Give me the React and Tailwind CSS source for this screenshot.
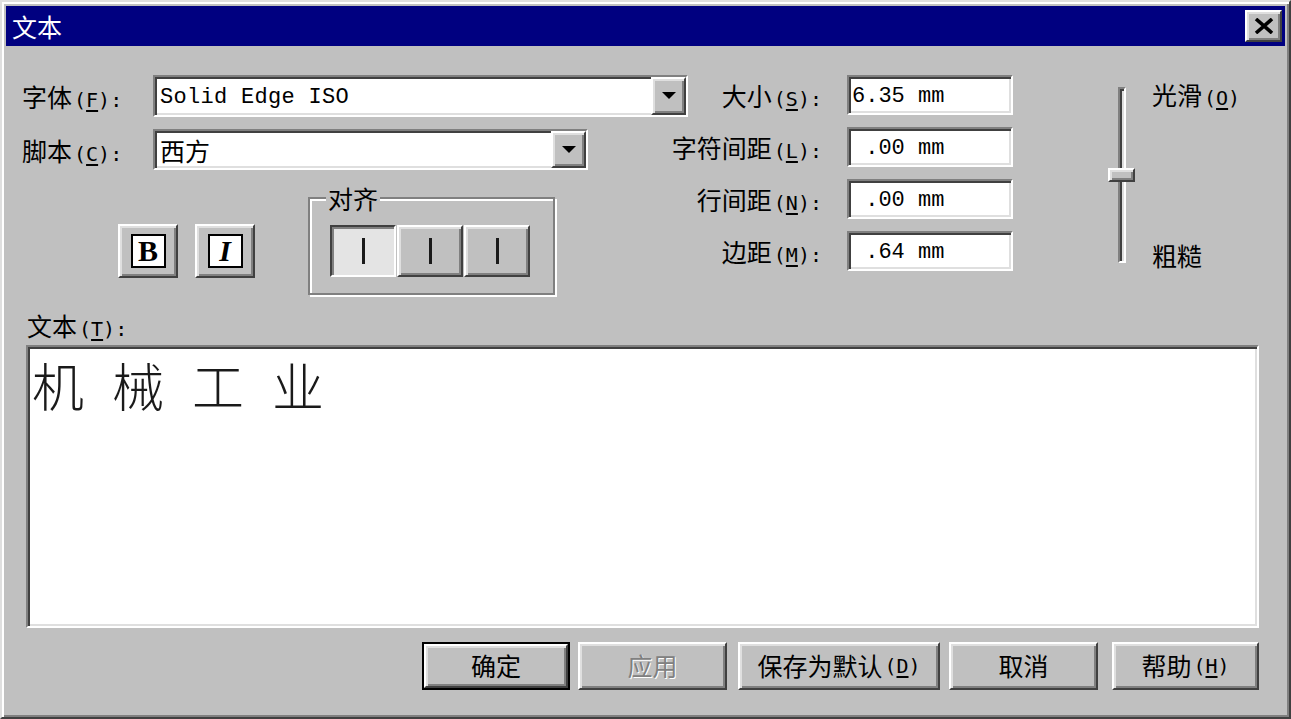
import React from "react";

const raised =
  "border-2 border-t-white border-l-white border-r-[#404040] border-b-[#404040] shadow-[inset_2px_2px_0_#dfdfdf,inset_-2px_-2px_0_#808080]";
const sunken =
  "border-2 border-t-[#808080] border-l-[#808080] border-r-white border-b-white shadow-[inset_2px_2px_0_#404040,inset_-2px_-2px_0_#dfdfdf]";

const cjk = { fontFamily: '"Noto Sans CJK SC", "Noto Sans", sans-serif' };
const mono = { fontFamily: '"DejaVu Sans Mono", "Liberation Mono", monospace' };

function Mn({ k, colon = true }) {
  return (
    <span className="text-[20px] ml-[2px]" style={mono}>
      (<span className="underline underline-offset-[3px]">{k}</span>){colon ? ":" : ""}
    </span>
  );
}

function Label({ text, k, className = "", colon = true }) {
  return (
    <div className={"h-[30px] leading-[30px] text-[25px] text-black whitespace-nowrap " + className}>
      <span>{text}</span>
      <Mn k={k} colon={colon} />
    </div>
  );
}

function Triangle() {
  return (
    <svg width="16" height="8" viewBox="0 0 16 8">
      <polygon points="1,0 15,0 8,7" fill="#000" />
    </svg>
  );
}

function Combo({ w, h, value, monoText }) {
  return (
    <div className={"flex bg-white " + sunken + " " + w + " " + h}>
      <div className="flex-1 flex items-center pl-[5px] pt-[2px] overflow-hidden">
        {monoText ? (
          <span className="text-[22px] tracking-[0.3px] text-black" style={{ fontFamily: '"Liberation Mono", monospace' }}>
            {value}
          </span>
        ) : (
          <span className="text-[25px] text-black leading-none">{value}</span>
        )}
      </div>
      <div className={"w-[35px] h-full bg-[#c0c0c0] flex items-center justify-center " + raised}>
        <Triangle />
      </div>
    </div>
  );
}

function Field({ value }) {
  return (
    <div className={"w-[166px] h-[40px] bg-white flex items-center pl-[3px] pt-[3px] " + sunken}>
      <span className="text-[22px] text-black whitespace-pre" style={{ fontFamily: '"Liberation Mono", monospace' }}>
        {value}
      </span>
    </div>
  );
}

function Btn({ children, w, className = "", def = false, disabled = false }) {
  const inner = (
    <div
      className={
        "w-full h-full flex items-center justify-center text-[25px] bg-[#c0c0c0] " +
        raised +
        (disabled ? " text-[#808080] [text-shadow:1px_1px_0_#ffffff]" : " text-black")
      }
    >
      {children}
    </div>
  );
  if (def) {
    return <div className={"h-[48px] border-2 border-black " + w + " " + className}>{inner}</div>;
  }
  return <div className={"h-[48px] " + w + " " + className}>{inner}</div>;
}

function AlignBtn({ pressed }) {
  return (
    <div
      className={
        "w-[66px] h-[52px] flex items-center justify-center " +
        (pressed
          ? "bg-[#e4e4e4] border-2 border-t-[#404040] border-l-[#404040] border-r-white border-b-white shadow-[inset_2px_2px_0_#808080]"
          : "bg-[#c0c0c0] " + raised)
      }
    >
      <div className="w-[3px] h-[26px] bg-[#1a1a1a]" />
    </div>
  );
}

function StyleBtn({ children, italic }) {
  return (
    <div className={"w-[60px] h-[54px] bg-[#c0c0c0] flex items-center justify-center " + raised}>
      <div className="w-[35px] h-[34px] bg-white border-2 border-black flex items-center justify-center overflow-hidden">
        <span
          className={"text-[30px] font-bold leading-none text-black " + (italic ? "italic" : "")}
          style={{ fontFamily: '"Liberation Serif", serif' }}
        >
          {children}
        </span>
      </div>
    </div>
  );
}

export default function App() {
  return (
    <div
      className="w-[1291px] h-[719px] bg-[#c0c0c0] border-2 border-t-[#dfdfdf] border-l-[#dfdfdf] border-r-[#404040] border-b-[#404040] shadow-[inset_2px_2px_0_#ffffff,inset_-2px_-2px_0_#808080] p-[4px] flex flex-col overflow-hidden"
      style={cjk}
    >
      {/* Title bar */}
      <div className="h-[40px] shrink-0 bg-[#000080] flex items-center justify-between pl-[6px] pr-[3px]">
        <span className="text-white text-[25px] leading-none">文本</span>
        <div className={"w-[37px] h-[32px] bg-[#c0c0c0] flex items-center justify-center " + raised}>
          <svg width="20" height="16" viewBox="0 0 20 16">
            <path d="M2 1 L18 15 M18 1 L2 15" stroke="#000" strokeWidth="3.6" />
          </svg>
        </div>
      </div>

      {/* Body */}
      <div className="flex-1 flex flex-col">
        {/* Top section */}
        <div className="flex pt-[29px] pl-[16px]">
          {/* Left column */}
          <div className="w-[666px] flex flex-col">
            <div className="flex items-center h-[42px]">
              <Label text="字体" k="F" className="w-[131px]" />
              <Combo w="w-[535px]" h="h-[42px]" value="Solid Edge ISO" monoText />
            </div>
            <div className="flex items-center h-[41px] mt-[12px]">
              <Label text="脚本" k="C" className="w-[131px]" />
              <Combo w="w-[435px]" h="h-[41px]" value="西方" />
            </div>
            <div className="flex items-start mt-[27px]">
              <div className="flex gap-[17px] ml-[96px] mt-[27px]">
                <StyleBtn>B</StyleBtn>
                <StyleBtn italic>I</StyleBtn>
              </div>
              <div className="relative ml-[53px] w-[247px] h-[98px] border-2 border-[#808080] shadow-[inset_2px_2px_0_#ffffff,2px_2px_0_#ffffff] pl-[20px] pt-[26px]">
                <div className="absolute left-[16px] top-[-13px] px-[2px] bg-[#c0c0c0] text-[25px] leading-[25px] text-black">
                  对齐
                </div>
                <div className="flex gap-[1px]">
                  <AlignBtn pressed />
                  <AlignBtn />
                  <AlignBtn />
                </div>
              </div>
            </div>
          </div>

          {/* Middle column */}
          <div className="flex flex-col gap-[12px]">
            {[
              ["大小", "S", "6.35 mm"],
              ["字符间距", "L", " .00 mm"],
              ["行间距", "N", " .00 mm"],
              ["边距", "M", " .64 mm"],
            ].map(([t, k, v]) => (
              <div key={k} className="flex items-center h-[40px]">
                <div className="w-[134px] flex justify-end">
                  <Label text={t} k={k} />
                </div>
                <div className="ml-[25px]">
                  <Field value={v} />
                </div>
              </div>
            ))}
          </div>

          {/* Slider column */}
          <div className="relative ml-[95px] mt-[12px] w-[27px] h-[176px] flex justify-center">
            <div className="w-[8px] h-full border-l-2 border-t-2 border-[#808080] border-r-2 border-r-white border-b-2 border-b-white shadow-[inset_2px_2px_0_#404040,inset_-2px_-2px_0_#dfdfdf]" />
            <div className={"absolute left-0 top-[81px] w-[27px] h-[14px] bg-[#c0c0c0] " + raised} />
          </div>
          <div className="ml-[17px] mt-[7px] h-[186px] flex flex-col justify-between">
            <Label text="光滑" k="O" colon={false} className="!h-[25px] !leading-[25px]" />
            <div className="h-[25px] leading-[25px] text-[25px] text-black">粗糙</div>
          </div>
        </div>

        {/* Text label */}
        <div className="pl-[21px] mt-[18px]">
          <div className="h-[25px] leading-[25px] text-[25px] text-black whitespace-nowrap">
            <span>文本</span>
            <Mn k="T" />
          </div>
        </div>

        {/* Text area */}
        <div className={"ml-[20px] mt-[7px] w-[1233px] h-[283px] bg-white " + sunken}>
          <div className="flex gap-[28px] pl-[4px] pt-[12px] text-[52px] leading-[52px] text-[#1a1a1a] font-light">
            <span>机</span>
            <span>械</span>
            <span>工</span>
            <span>业</span>
          </div>
        </div>

        {/* Buttons */}
        <div className="flex justify-end pr-[26px] mt-[14px]">
          <Btn w="w-[148px]" def>确定</Btn>
          <Btn w="w-[149px]" className="ml-[8px]" disabled>应用</Btn>
          <Btn w="w-[202px]" className="ml-[11px]">
            <span>保存为默认</span>
            <Mn k="D" colon={false} />
          </Btn>
          <Btn w="w-[149px]" className="ml-[9px]">取消</Btn>
          <Btn w="w-[147px]" className="ml-[14px]">
            <span>帮助</span>
            <Mn k="H" colon={false} />
          </Btn>
        </div>
      </div>
    </div>
  );
}
